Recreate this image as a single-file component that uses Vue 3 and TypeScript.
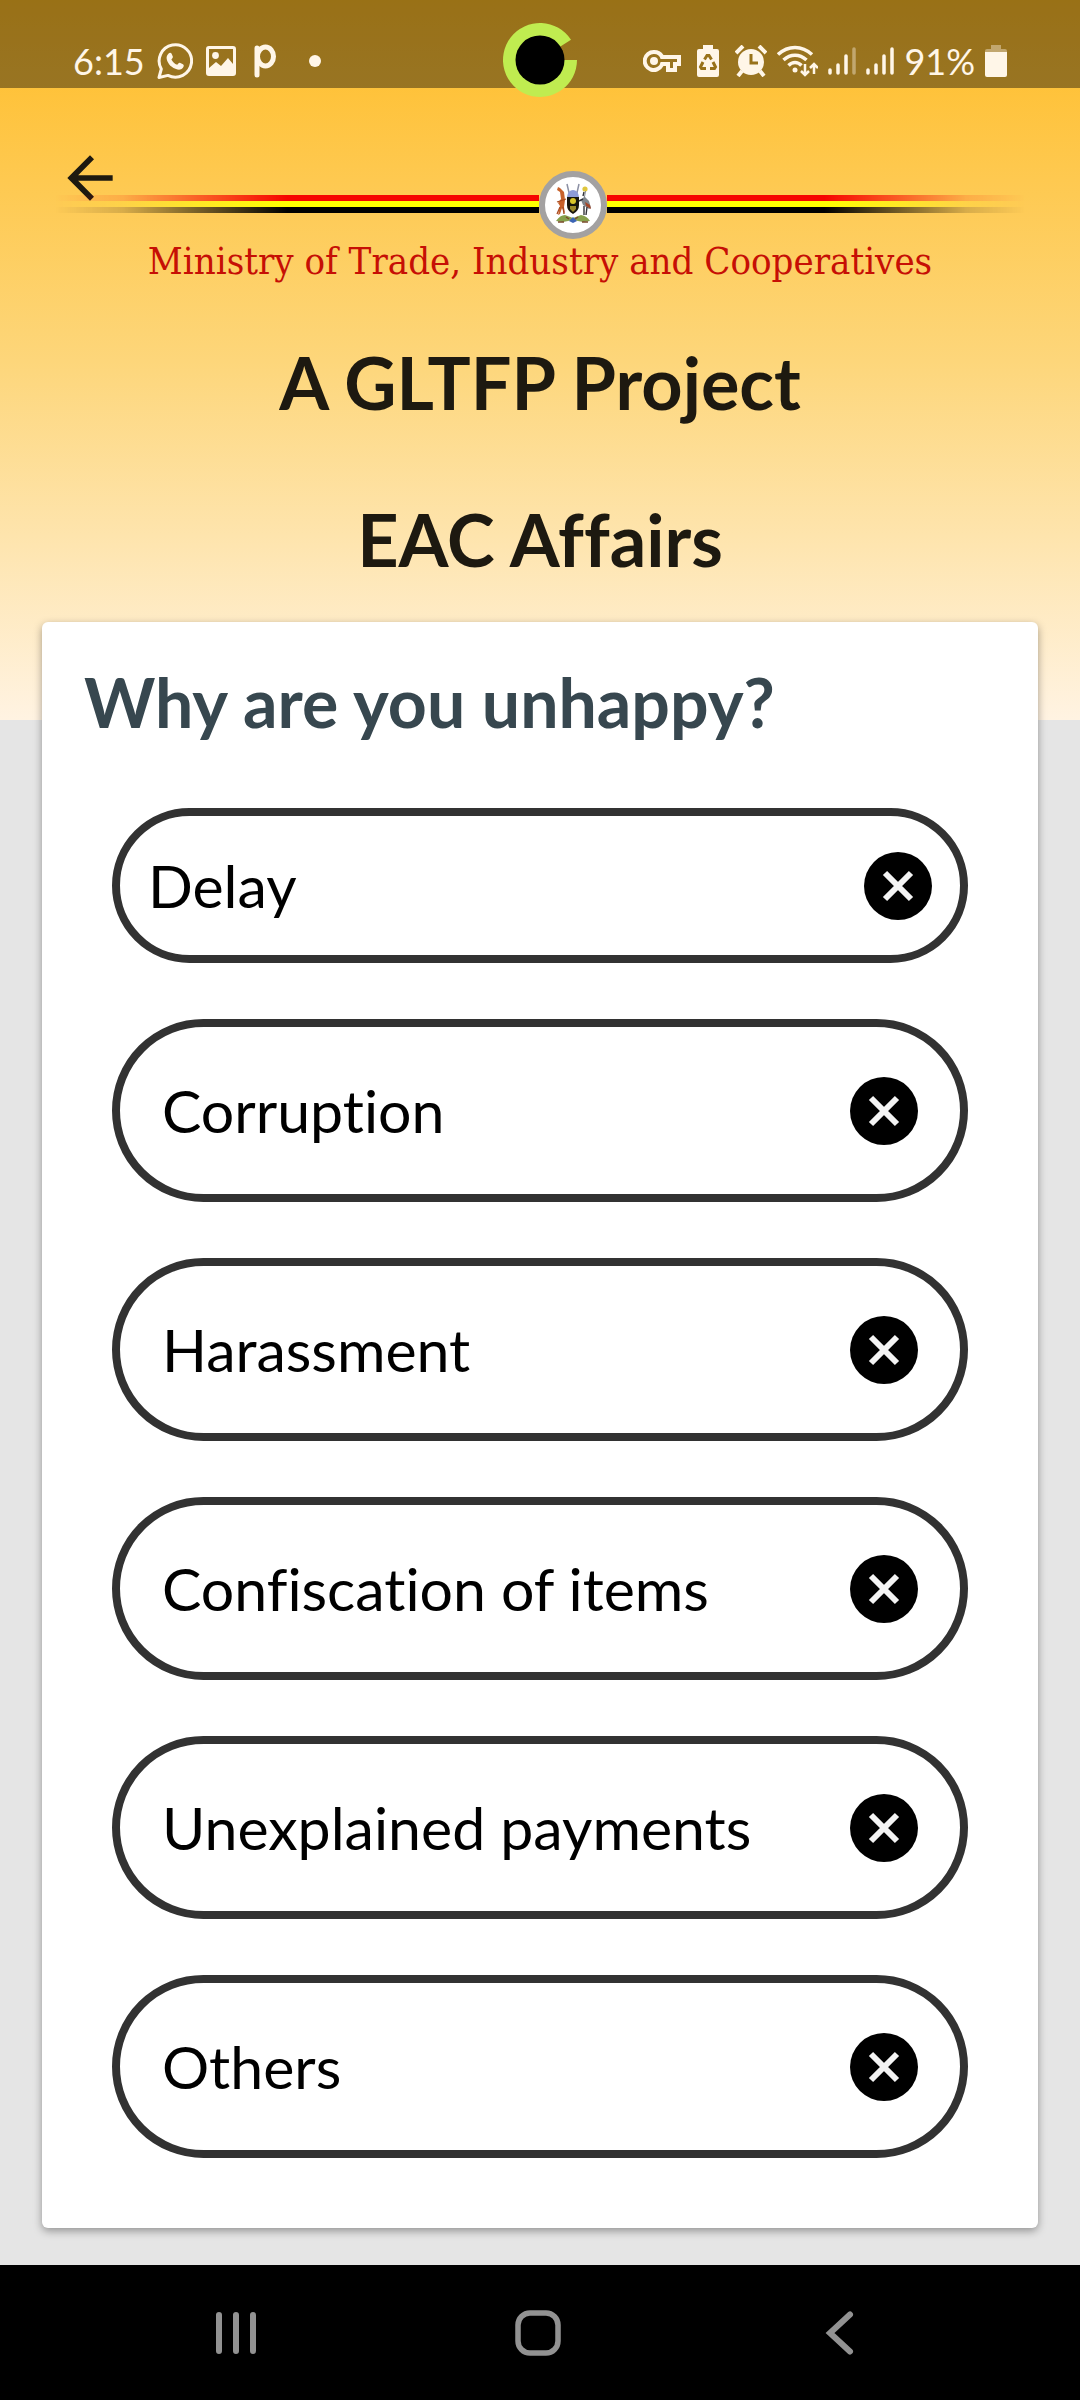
<script setup lang="ts">
import { ref } from 'vue'

interface Reason {
  id: string
  label: string
  compact?: boolean
}

const reasons: Reason[] = [
  { id: 'delay', label: 'Delay', compact: true },
  { id: 'corruption', label: 'Corruption' },
  { id: 'harassment', label: 'Harassment' },
  { id: 'confiscation', label: 'Confiscation of items' },
  { id: 'payments', label: 'Unexplained payments' },
  { id: 'others', label: 'Others' },
]

const selected = ref<string | null>(null)
</script>

<template>
  <div class="screen">
    <div class="status">
      <div class="status-group">
        <span class="clock">6:15</span>
        <svg width="36" height="36" viewBox="0 0 36 36" fill="none">
          <path d="M2 34.5 4.3 26A16.2 16.2 0 1 1 11 32.4Z" stroke="currentColor" stroke-width="3" stroke-linejoin="round" />
          <path d="M11.6 10.4c1-1 2.400-.9 2.900.2l1.300 3c.3.8-.1 1.500-1.400 2.900 1.400 2.600 3.200 4.300 5.800 5.300 1.300-1.600 1.900-2.300 2.700-2l3 1.500c1 .5 1 1.400.6 2.400-.8 2.300-3.700 3.300-6 2.800-5.800-1.400-9.600-5.200-10.800-10.400-.4-2.200.4-4.400 1.900-5.700Z" fill="currentColor" />
        </svg>
        <svg width="32" height="32" viewBox="0 0 32 32">
          <path fill="currentColor" fill-rule="evenodd" d="M4 1h24a3 3 0 0 1 3 3v24a3 3 0 0 1-3 3H4a3 3 0 0 1-3-3V4a3 3 0 0 1 3-3Zm0 3v19l7-6 5 4 7-8 5 6V4Z" />
          <circle cx="10.500" cy="10.500" r="3.400" fill="currentColor" />
        </svg>
        <svg class="p-icon" width="24" height="34" viewBox="0 0 24 34" fill="none" stroke="currentColor" stroke-width="5" stroke-linecap="round">
          <path d="M4 4v27" />
          <ellipse cx="12.500" cy="12.500" rx="8" ry="9.500" />
        </svg>
        <i class="dot"></i>
      </div>

      <div class="status-group status-right">
        <svg class="spaced" width="38" height="24" viewBox="0 0 38 24">
          <path fill="currentColor" fill-rule="evenodd" d="M11 1a11 11 0 1 0 9.500 16H23v6h11v-6h4V6H20.500A11 11 0 0 0 11 1Zm0 4a7 7 0 0 1 6.600 5H34v3h-4v6h-3v-6h-9.400A7 7 0 1 1 11 5Z" />
          <circle cx="11" cy="12" r="4" fill="currentColor" />
        </svg>
        <svg class="spaced" width="22" height="32" viewBox="0 0 22 32">
          <path fill="currentColor" d="M6 0h10v4h4a2 2 0 0 1 2 2v24a2 2 0 0 1-2 2H2a2 2 0 0 1-2-2V6a2 2 0 0 1 2-2h4Z" />
          <g fill="none" stroke="#98721a" stroke-width="3">
            <path d="m7.500 14.500 2.500-4h2l2.500 4M6 17l-2.500 5 1 1.500H9M16 17l2.500 5-1 1.500H13" />
          </g>
        </svg>
        <svg width="32" height="32" viewBox="0 0 32 32">
          <circle cx="16" cy="17" r="13" fill="currentColor" />
          <g stroke="currentColor" stroke-width="4" fill="none">
            <path d="m1 8 7-7M31 8l-7-7M7 26l-4 5M25 26l4 5" />
          </g>
          <path d="M16 9v9h7" fill="none" stroke="#98721a" stroke-width="3" />
        </svg>
        <svg width="41" height="33" viewBox="0 0 41 33" fill="none" stroke="currentColor" stroke-width="3.500">
          <path d="M1 9.500c10-9.500 24-9.500 34 0M6.500 15c7-6.500 16-6.500 23 0M11.500 20.500c4-4 9-4 13 0" />
          <circle cx="18" cy="25" r="2.500" fill="currentColor" stroke="none" />
          <path d="M28 19v11m-4-4 4 4 4-4M37 29V19m-4 4 4-4 4 4" stroke-width="2.500" />
        </svg>
        <svg width="28" height="32" viewBox="0 0 28 32" stroke="currentColor" stroke-width="3.500" stroke-linecap="round">
          <path d="M2 25v3M10 20v8M18 11v17" />
          <path d="M26 4v24" opacity=".4" />
        </svg>
        <svg width="28" height="32" viewBox="0 0 28 32" stroke="currentColor" stroke-width="3.500" stroke-linecap="round">
          <path d="M2 25v3M10 20v8M18 11v17M26 4v24" />
        </svg>
        <span class="clock">91%</span>
        <svg width="22" height="32" viewBox="0 0 22 32">
          <path d="M6 0h10v4h4a2 2 0 0 1 2 2v2H0V6a2 2 0 0 1 2-2h4Z" fill="currentColor" opacity=".4" />
          <path d="M0 7h22v23a2 2 0 0 1-2 2H2a2 2 0 0 1-2-2Z" fill="currentColor" />
        </svg>
      </div>

      <svg class="camera" width="76" height="76" viewBox="-38 -38 76 76">
        <path d="M37 0A37 37 0 1 1 31 -20.200L18 -12 20 0Z" fill="#c0ec50" />
        <circle r="24.500" />
      </svg>
    </div>

    <header class="header">
      <button class="back" type="button" aria-label="Back">
        <svg width="68" height="68" viewBox="0 0 24 24">
          <path fill="#1d1910" d="M20 11H7.830l5.590-5.590L12 4l-8 8 8 8 1.410-1.410L7.830 13H20z" />
        </svg>
      </button>

      <div class="flag">
        <span class="stripes stripes-left"></span>
        <svg class="emblem" width="68" height="68" viewBox="0 0 68 68">
          <circle cx="34" cy="34" r="31" fill="#fff" stroke="#a3a1a1" stroke-width="6" />
          <path d="M17 50q4-6 9-6l8 3 8-3q6 1 9 6l-7 1-10-2-10 2Z" fill="#86a04c" />
          <path d="M19 51h6m18 0h6M27 46l3 2m9-2-3 2" stroke="#7a4a2a" stroke-width="1.500" />
          <path d="m30 50 4-4 4 4-4 2Z" fill="#3c64b4" />
          <path d="m28 13 3 13m9-13-3 13" stroke="#8c90a4" stroke-width="1.500" />
          <path d="M28 26q1-7 6-7t6 7Z" fill="#8d9bd6" />
          <path d="M28 26h12v8q0 6-6 9-6-3-6-9Z" fill="#17150c" />
          <circle cx="34" cy="30" r="3" fill="#d9c62b" />
          <path d="M31 35h6v3l-3 3-3-3Z" fill="#9c8a28" />
          <path d="m19 16 2 1 4 4 1 8-1 7 1 7-3-6-2 6-2 1 2-9-2-3 3-4-1-7-3-2Z" fill="#c8612b" />
          <path d="m21 36-3 7m6-7 1 7M18 31l9-3" stroke="#a64a20" stroke-width="1.300" />
          <circle cx="46" cy="18" r="2.600" fill="#dfc63c" />
          <path d="m46 20-1 6-3 3 2 5 6 4 2-1-2-7-4-4 1-6Z" fill="#80868c" />
          <path d="m46 31 5 3 1 4-5-3Z" fill="#a5482a" />
          <path d="m45 21-1 4m-4 5 4-2m1 7v9m3-8-1 8" stroke="#33343a" stroke-width="1.400" />
        </svg>
        <span class="stripes stripes-right"></span>
      </div>
      <p class="ministry">Ministry of Trade, Industry and Cooperatives</p>
      <h1 class="title">A GLTFP Project</h1>
      <h2 class="title">EAC Affairs</h2>
    </header>

    <main class="card">
      <h3 class="question">Why are you unhappy?</h3>
      <div class="reasons">
        <button
          v-for="reason in reasons"
          :key="reason.id"
          type="button"
          class="reason"
          :class="{ compact: reason.compact }"
          :aria-pressed="selected === reason.id"
          @click="selected = reason.id"
        >
          <span>{{ reason.label }}</span>
          <svg width="68" height="68" viewBox="0 0 68 68">
            <circle cx="34" cy="34" r="34" />
            <path d="m21 21 26 26m0-26L21 47" stroke="#f4f4f4" stroke-width="6" />
          </svg>
        </button>
      </div>
    </main>

    <nav class="nav">
      <button type="button" aria-label="Recent apps">
        <svg width="46" height="46" viewBox="0 0 46 46" stroke="#929292" stroke-width="6" stroke-linecap="round">
          <path d="M6 5v36M23 5v36M40 5v36" />
        </svg>
      </button>
      <button type="button" aria-label="Home">
        <svg width="46" height="46" viewBox="0 0 46 46">
          <rect x="3" y="3" width="40" height="40" rx="12" fill="none" stroke="#929292" stroke-width="5.500" />
        </svg>
      </button>
      <button type="button" aria-label="Back">
        <svg width="46" height="46" viewBox="0 0 46 46">
          <path d="M33 4.500 13 23l20 18.500" fill="none" stroke="#929292" stroke-width="6" stroke-linecap="round" />
        </svg>
      </button>
    </nav>
  </div>
</template>

<style>
body {
  margin: 0;
}
</style>

<style scoped>
.screen {
  display: flex;
  flex-direction: column;
  min-height: 100vh;
  font-family: Lato, "Noto Sans", sans-serif;
  font-variant-ligatures: none;
  background: #e5e5e5 linear-gradient(#ffbc26, #fdd67a 50%, #fff3e2) no-repeat top / 100% 720px;
}

svg {
  display: block;
  flex: none;
}

button {
  margin: 0;
  padding: 0;
  border: 0;
  background: none;
  font: inherit;
  font-variant-ligatures: none;
  color: inherit;
  cursor: pointer;
}

.status {
  position: relative;
  display: flex;
  justify-content: space-between;
  box-sizing: border-box;
  height: 88px;
  padding: 34px 73px 0;
  color: #fff6e8;
  background: rgba(0, 0, 0, 0.4);
}

.status-group {
  display: flex;
  align-items: center;
  gap: 12px;
  height: 54px;
}

.status-right {
  gap: 10px;
}

.spaced {
  margin-right: 6px;
}

.clock {
  font-size: 36px;
  line-height: 54px;
}

.p-icon {
  margin-left: 4px;
}

.dot {
  width: 12px;
  height: 12px;
  margin-left: 20px;
  border-radius: 50%;
  background: currentColor;
}

.camera {
  position: absolute;
  top: 22px;
  left: 50%;
  margin-left: -38px;
}

.header {
  position: relative;
  padding: 83px 0 4px;
  text-align: center;
}

.back {
  position: absolute;
  top: 56px;
  left: 56px;
}

.flag {
  display: flex;
  align-items: center;
  padding: 0 55px;
}

.stripes {
  height: 18px;
  margin-bottom: 2px;
  background: linear-gradient(#f60400 6px, #ff0 6px 12px, #000 12px);
}

.stripes-left {
  flex: 484;
  mask-image: linear-gradient(90deg, transparent, rgba(0, 0, 0, 0.15) 14%, #000 48%);
}

.stripes-right {
  flex: 418;
  mask-image: linear-gradient(270deg, transparent, rgba(0, 0, 0, 0.15) 14%, #000 48%);
}

.ministry {
  margin: 0 0 21px;
  font-family: "DejaVu Serif Condensed", "DejaVu Serif", serif;
  font-size: 38px;
  line-height: 44px;
  color: #c60f05;
}

.title {
  margin: 0;
  font-size: 72px;
  font-weight: 700;
  line-height: 157px;
  color: #1d1910;
}

.card {
  margin: 0 42px 37px;
  padding: 30px 70px 70px;
  border-radius: 6px;
  background: #fff;
  box-shadow: 0 3px 8px rgba(0, 0, 0, 0.36);
}

.question {
  margin: 0 -28px 56px;
  font-size: 68px;
  line-height: 100px;
  color: #37474f;
}

.reasons {
  display: flex;
  flex-direction: column;
  gap: 56px;
}

.reason {
  display: flex;
  align-items: center;
  justify-content: space-between;
  box-sizing: border-box;
  min-height: 183px;
  padding: 0 42px;
  border: 8px solid #323232;
  border-radius: 92px;
  font-size: 59px;
  line-height: 72px;
  color: #000;
  text-align: left;
}

.reason.compact {
  min-height: 155px;
  padding: 0 28px;
}

.nav {
  display: flex;
  align-items: center;
  height: 135px;
  margin-top: auto;
  padding: 0 89px 0 85px;
  background: #000;
}

.nav button {
  display: flex;
  flex: 1;
  justify-content: center;
}
</style>
